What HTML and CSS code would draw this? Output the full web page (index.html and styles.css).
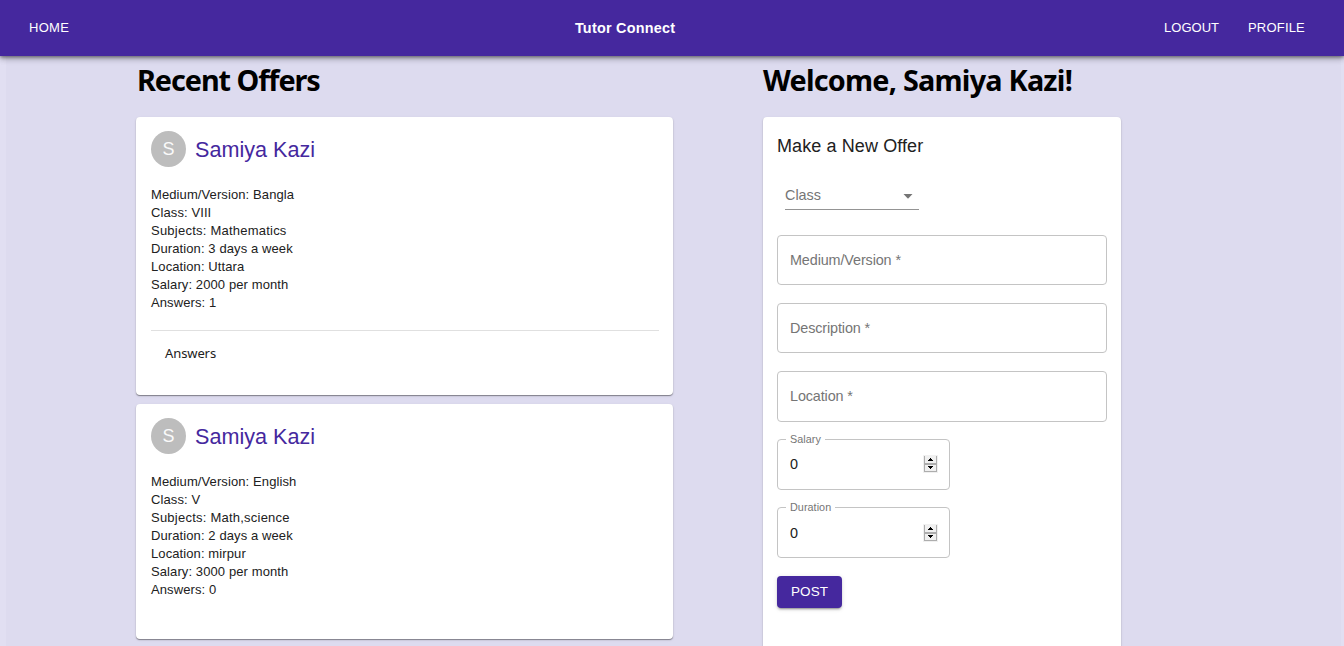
FILE: index.html
```html
<!DOCTYPE html>
<html lang="en">
<head>
<meta charset="utf-8">
<title>Tutor Connect</title>
<link rel="stylesheet" href="styles.css">
</head>
<body>
<header class="navbar">
  <nav class="nav-side"><a class="nav-link home">HOME</a></nav>
  <div class="brand">Tutor Connect</div>
  <nav class="nav-side nav-right"><a class="nav-link logout">LOGOUT</a><a class="nav-link profile">PROFILE</a></nav>
</header>
<main class="page">
  <section class="offers">
    <h1 class="heading heading-recent">Recent Offers</h1>
    <article class="card offer">
      <div class="author"><span class="avatar">S</span><span class="name">Samiya Kazi</span></div>
      <ul class="details">
        <li>Medium/Version: Bangla</li>
        <li>Class: VIII</li>
        <li class="subjects">Subjects: Mathematics</li>
        <li>Duration: 3 days a week</li>
        <li>Location: Uttara</li>
        <li>Salary: 2000 per month</li>
        <li>Answers: 1</li>
      </ul>
      <div class="answers">Answers</div>
    </article>
    <article class="card offer offer-second">
      <div class="author"><span class="avatar">S</span><span class="name">Samiya Kazi</span></div>
      <ul class="details">
        <li>Medium/Version: English</li>
        <li>Class: V</li>
        <li class="subjects">Subjects: Math,science</li>
        <li>Duration: 2 days a week</li>
        <li>Location: mirpur</li>
        <li>Salary: 3000 per month</li>
        <li>Answers: 0</li>
      </ul>
    </article>
  </section>
  <section class="compose">
    <h1 class="heading heading-welcome">Welcome, Samiya Kazi!</h1>
    <form class="card form">
      <h2 class="form-title">Make a New Offer</h2>
      <div class="select"><span>Class</span>
        <svg class="caret" width="10" height="5" viewBox="0 0 10 5"><path d="M0.5 0h9L5 4.7z" fill="#757575"/></svg>
      </div>
      <div class="field">Medium/Version *</div>
      <div class="field">Description *</div>
      <div class="field field-tall">Location *</div>
      <fieldset class="number salary">
        <legend>Salary</legend>
        <span class="value">0</span>
        <svg class="spinner" width="15" height="18" viewBox="0 0 15 18" shape-rendering="crispEdges"><path fill="#f0f0f0" d="M0 0h15v18H0z"/><path fill="#adadad" d="M1 1h1v16H1zM13 1h1v16h-1zM1 8h13v2H1zM1 16h13v1H1z"/><path fill="#000" d="M7 3h1v1H7zM6 4h3v1H6zM5 5h5v1H5zM5 11h5v1H5zM6 12h3v1H6zM7 13h1v1H7z"/></svg>
      </fieldset>
      <fieldset class="number hours">
        <legend>Duration</legend>
        <span class="value">0</span>
        <svg class="spinner" width="15" height="18" viewBox="0 0 15 18" shape-rendering="crispEdges"><path fill="#f0f0f0" d="M0 0h15v18H0z"/><path fill="#adadad" d="M1 1h1v16H1zM13 1h1v16h-1zM1 8h13v2H1zM1 16h13v1H1z"/><path fill="#000" d="M7 3h1v1H7zM6 4h3v1H6zM5 5h5v1H5zM5 11h5v1H5zM6 12h3v1H6zM7 13h1v1H7z"/></svg>
      </fieldset>
      <button type="button" class="post">POST</button>
    </form>
  </section>
</main>
</body>
</html>
```
FILE: styles.css
```css
* { box-sizing: border-box; }
body {
  margin: 0;
  height: 646px;
  overflow: hidden;
  background: #e1dff2;
  font-family: "Liberation Sans", Arial, sans-serif;
  color: #212121;
}
.navbar {
  position: relative;
  display: flex;
  align-items: center;
  justify-content: space-between;
  height: 56px;
  padding: 0 39px 0 29px;
  background: #45289e;
  color: #fff;
  box-shadow: 0 2px 4px -1px rgba(0,0,0,.2), 0 4px 5px rgba(0,0,0,.14), 0 1px 9px rgba(0,0,0,.12), 0 1px 3px rgba(0,0,0,.3);
}
.nav-side { display: flex; padding-bottom: 1px; }
.nav-right { gap: 29px; }
.nav-link { font-size: 13px; line-height: 20px; letter-spacing: .2px; }
.home { letter-spacing: .3px; }
.logout { letter-spacing: 0; }
.brand { font-size: 14.4px; font-weight: 700; letter-spacing: .25px; line-height: 20px; margin-left: 17px; }
.page {
  display: flex;
  gap: 90px;
  height: 590px;
  margin: 0 3px 0 6px;
  padding-left: 130px;
  background: #dddbef;
}
.offers { width: 537px; }
.compose { width: 358px; }
.heading {
  margin: 0;
  height: 61px;
  padding-top: 4px;
  font: 700 28.8px/40px "Noto Sans", "Open Sans", sans-serif;
  color: #000;
  white-space: nowrap;
}
.heading-recent { letter-spacing: -1.05px; padding-left: 1px; }
.heading-welcome { letter-spacing: -.77px; }
.card {
  background: #fff;
  border-radius: 4px;
  box-shadow: 0 1px 1px rgba(0,0,0,.38), 0 1px 3px rgba(0,0,0,.1);
}
.offer { height: 278px; padding: 14px 14px 0 15px; }
.offer-second { height: 235px; margin-top: 9px; }
.author { display: flex; align-items: center; height: 36px; }
.avatar {
  width: 35px;
  height: 36px;
  margin-right: 9px;
  border-radius: 50%;
  background: #bdbdbd;
  color: #fafafa;
  font-size: 18px;
  line-height: 36px;
  text-align: center;
}
.name { font-size: 21.6px; letter-spacing: 0; color: #45289e; line-height: 30px; padding-top: 2px; }
.details {
  list-style: none;
  margin: 19px 0 0;
  padding: 0;
  font-size: 13px;
  line-height: 18px;
  letter-spacing: .1px;
  white-space: nowrap;
}
.subjects { letter-spacing: .23px; }
.answers {
  margin-top: 18px;
  padding: 12px 14px;
  border-top: 1px solid #e0e0e0;
  font: 13px/20px "Noto Sans", "Open Sans", sans-serif;
  letter-spacing: -.1px;
}
.form { height: 560px; padding: 14px; }
.form-title { margin: 0; font-size: 18px; font-weight: 400; line-height: 30px; letter-spacing: .1px; }
.select {
  display: flex;
  align-items: center;
  justify-content: space-between;
  width: 134px;
  height: 30px;
  margin: 19px 0 25px 8px;
  padding: 0 6px 0 0;
  border-bottom: 1px solid #949494;
  color: #757575;
  font-size: 14.4px;
  letter-spacing: 0;
}
.caret { margin-top: 3px; }
.field {
  display: flex;
  align-items: center;
  height: 50px;
  margin-bottom: 18px;
  padding-left: 12px;
  border: 1px solid #c4c4c4;
  border-radius: 4px;
  color: #757575;
  font-size: 14.4px;
  letter-spacing: -.12px;
}
.field-tall { height: 51px; margin-bottom: 11px; padding-bottom: 2px; }
.number {
  display: flex;
  align-items: flex-start;
  justify-content: space-between;
  width: 173px;
  height: 57px;
  margin: 0 0 11px;
  padding: 9px 11px 0 12px;
  border: 1px solid #c4c4c4;
  border-radius: 4px;
}
.salary .spinner { margin-top: 1px; }
.hours { padding-top: 10px; }
.hours .spinner { margin-top: 1px; }
.number legend { margin-left: -4px; padding: 0 4px; height: 12px; line-height: 12px; font-size: 10.8px; letter-spacing: .05px; color: #757575; }
.value { font-size: 14.4px; line-height: 20px; }
.post {
  display: block;
  width: 65px;
  height: 32px;
  margin: 18px 0 0;
  padding: 0 0 1px;
  border: 0;
  border-radius: 4px;
  background: #45289e;
  color: #fff;
  font: 13.5px/30px "Liberation Sans", Arial, sans-serif;
  letter-spacing: .1px;
  box-shadow: 0 3px 1px -2px rgba(0,0,0,.2), 0 2px 2px rgba(0,0,0,.14), 0 1px 5px rgba(0,0,0,.12);
}
```
